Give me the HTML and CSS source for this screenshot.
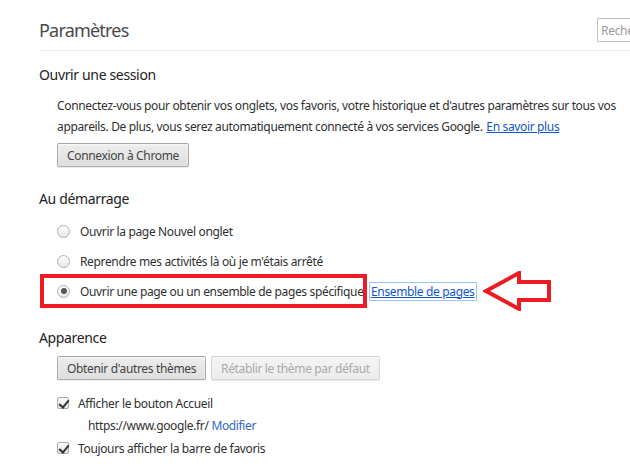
FILE: index.html
```html
<!DOCTYPE html>
<html lang="fr">
<head>
<meta charset="UTF-8" />
<title>Paramètres</title>
<link rel="stylesheet" href="styles.css">
</head>
<body>

<div class="page">
  <header class="top">
    <h1>Paramètres</h1>
    <input class="search" type="text" placeholder="Rechercher">
  </header>

  <section class="block">
    <h3>Ouvrir une session</h3>
    <div class="inner">
      <p class="desc">Connectez-vous pour obtenir vos onglets, vos favoris, votre historique et d'autres paramètres sur tous vos appareils. De plus, vous serez automatiquement connecté à vos services Google. <a href="#">En savoir plus</a></p>
      <button class="btn">Connexion à Chrome</button>
    </div>
  </section>

  <section class="block">
    <h3>Au démarrage</h3>
    <div class="inner">
      <div class="row"><span class="radio"></span>Ouvrir la page Nouvel onglet</div>
      <div class="row"><span class="radio"></span>Reprendre mes activités là où je m'étais arrêté</div>
      <div class="row">
        <span class="mark"><span class="radio on"></span>Ouvrir une page ou un ensemble de pages spécifique.</span>
        <a href="#" class="focus">Ensemble de pages</a>
        <svg class="arrow" width="70" height="40" viewBox="0 0 70 40">
          <polygon points="3,20 36,2 36,11 66,11 66,29 36,29 36,38" fill="#fff" stroke="#ed1c24" stroke-width="4" />
        </svg>
      </div>
    </div>
  </section>

  <section class="block">
    <h3>Apparence</h3>
    <div class="inner">
      <div class="buttons">
        <button class="btn">Obtenir d'autres thèmes</button>
        <button class="btn" disabled>Rétablir le thème par défaut</button>
      </div>
      <div class="check first"><span class="box"></span>Afficher le bouton Accueil</div>
      <div class="home">https://www.google.fr/ <a href="#">Modifier</a></div>
      <div class="check"><span class="box"></span>Toujours afficher la barre de favoris</div>
    </div>
  </section>
</div>

</body>
</html>
```

FILE: styles.css
```css
body { margin: 0; font-family: "Noto Sans", Arial, sans-serif; font-size: 12px; letter-spacing: -0.35px; color: #303030; background: #fff; overflow: hidden; }
.page { padding-left: 39px; }

.top { display: flex; justify-content: space-between; align-items: center; height: 40px; padding-top: 10px; border-bottom: 1px solid #eee; overflow: hidden; }
h1 { margin: 0; font-size: 18px; font-weight: normal; letter-spacing: -0.8px; color: #4a4a4a; }
.search { width: 33px; height: 24px; box-sizing: border-box; border: 1px solid #bfbfbf; border-right: none; border-radius: 2px 0 0 2px; padding: 0 0 0 3px; font: 12px "Noto Sans", sans-serif; letter-spacing: -0.3px; }
.search::placeholder { color: #999; }

.block { margin-top: 14px; }
.block + .block { margin-top: 22px; }
h3 { margin: 0; font-size: 14px; font-weight: normal; color: #222; line-height: 20px; }
.inner { padding-left: 18px; }

.desc { margin: 10px 0 6px; line-height: 21px; }
.desc a { margin-left: 1px; }
a { color: #15c; }
.home a { text-decoration: none; color: #36c; }

.btn { font: 12px "Noto Sans", sans-serif; letter-spacing: -0.35px; color: #444; height: 24px; padding: 0 9px; border: 1px solid rgba(0,0,0,0.25); border-radius: 2px; background: linear-gradient(#ededed, #dedede); box-shadow: 0 1px 0 rgba(0,0,0,0.08), inset 0 1px 2px rgba(255,255,255,0.75); }
.btn:disabled { color: #aaa; border-color: rgba(0,0,0,0.12); background: linear-gradient(#f4f4f4, #ececec); }

.row { display: flex; align-items: center; height: 30px; }
.row:first-child { margin-top: 7px; }
.radio { width: 13px; height: 13px; border: 1px solid #b0b0b0; border-radius: 50%; background: linear-gradient(#fff, #e6e6e6); margin-right: 10px; box-sizing: border-box; display: inline-flex; align-items: center; justify-content: center; flex-shrink: 0; }
.radio.on::after { content: ""; width: 6px; height: 6px; border-radius: 50%; background: #555; }

.mark { display: flex; align-items: center; box-sizing: border-box; height: 34px; width: 327px; overflow: hidden; white-space: nowrap; border: 4px solid #ed1c24; margin-left: -17px; padding-left: 13px; flex-shrink: 0; }
.focus { margin-left: 3px; outline: 1px solid #9cc3f5; padding: 0 1px; }
.arrow { margin-left: 7px; flex-shrink: 0; }

.buttons { display: flex; gap: 5px; margin-top: 8px; }
.check { display: flex; align-items: center; height: 22px; }
.check.first { height: 24px; margin-top: 11px; }
.box { width: 12px; height: 12px; box-sizing: border-box; border: 1px solid #aaa; border-radius: 2px; background: linear-gradient(#fff, #e4e4e4); margin-right: 9px; position: relative; }
.box::after { content: ""; position: absolute; left: 3px; top: 0; width: 4px; height: 8px; border: solid #333; border-width: 0 2px 2px 0; transform: rotate(40deg); }
.home { padding-left: 31px; height: 22px; line-height: 22px; }
```
